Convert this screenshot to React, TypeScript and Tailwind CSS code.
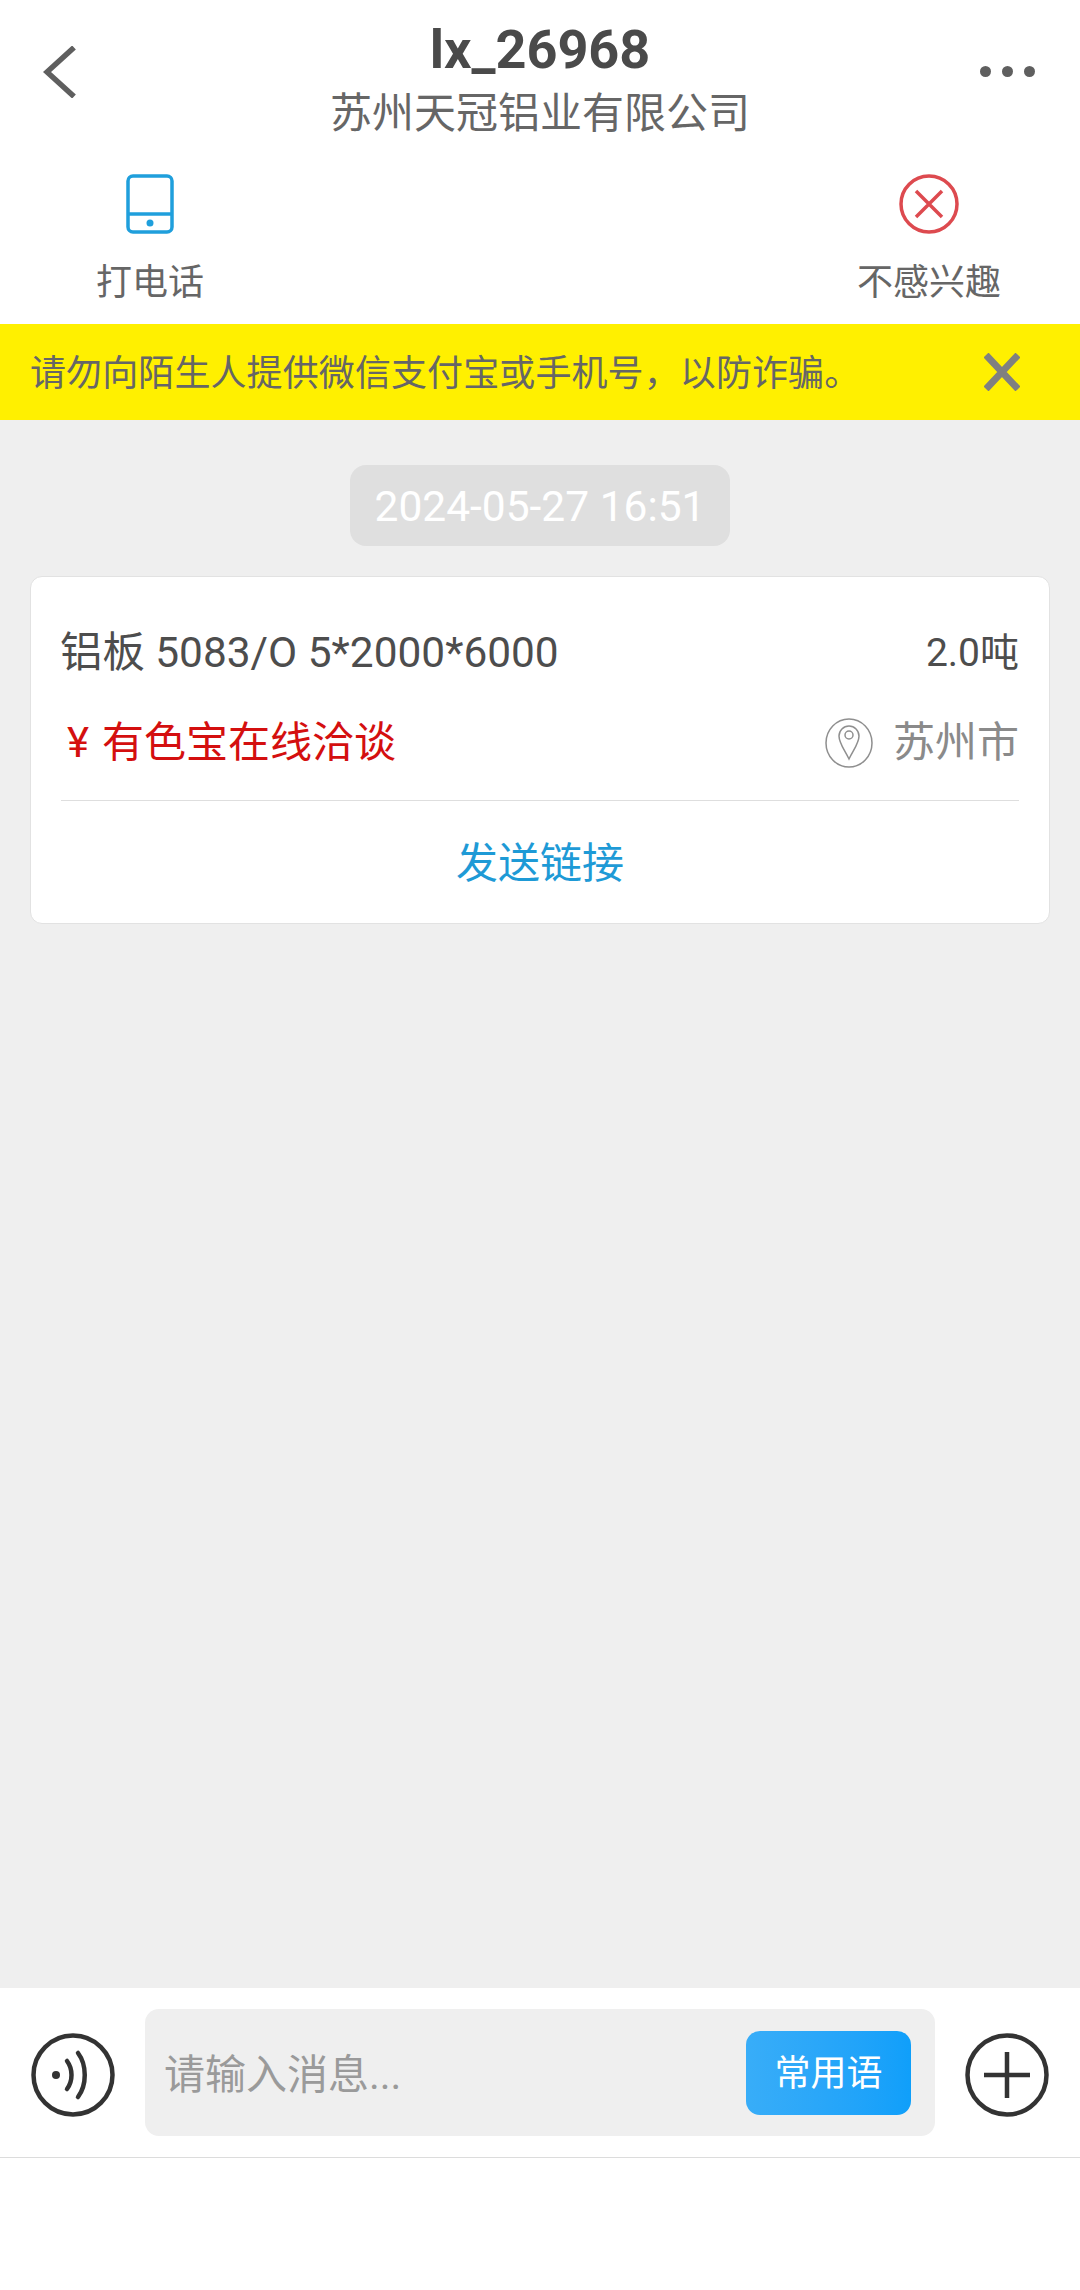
export default function App() {
  return (
    <div className="flex h-[2290px] w-[1080px] flex-col bg-white font-['Roboto','Noto_Sans_CJK_SC',sans-serif]">
      {/* title */}
      <div className="flex h-[150px] items-start justify-between">
        <div className="flex w-[200px] pl-[43px] pt-[46px]">
          <svg width="34" height="52" viewBox="0 0 34 52" fill="none" stroke="#5f5f5f" strokeWidth="5.5">
            <path d="M31 1.5 L4 26 L31 50.5" />
          </svg>
        </div>
        <div className="flex flex-col items-center pt-[15px]">
          <div className="text-[54px] leading-[70px] font-bold text-[#4a4a4a]">lx_26968</div>
          <div className="text-[42px] leading-[58px] text-[#666666]">苏州天冠铝业有限公司</div>
        </div>
        <div className="flex w-[200px] justify-end gap-[11px] pr-[45px] pt-[66px]">
          <span className="h-[11px] w-[11px] rounded-full bg-[#5f5f5f]" />
          <span className="h-[11px] w-[11px] rounded-full bg-[#5f5f5f]" />
          <span className="h-[11px] w-[11px] rounded-full bg-[#5f5f5f]" />
        </div>
      </div>

      {/* actions */}
      <div className="flex h-[174px] items-start justify-between pl-[96px] pr-[79px] pt-[24px]">
        <div className="flex w-[108px] flex-col items-center">
          <svg width="48" height="60" viewBox="0 0 48 60" fill="none" stroke="#1f9fdc" strokeWidth="3.5">
            <rect x="2" y="2" width="44" height="56" rx="5" />
            <path d="M2 40 H46" />
            <circle cx="24" cy="49" r="3.5" fill="#1f9fdc" stroke="none" />
          </svg>
          <div className="mt-[26px] text-[36px] leading-[46px] text-[#666666]">打电话</div>
        </div>
        <div className="flex w-[144px] flex-col items-center">
          <svg width="60" height="60" viewBox="0 0 60 60" fill="none" stroke="#dd4a4f" strokeWidth="3.5">
            <circle cx="30" cy="30" r="28" />
            <path d="M17 17 L43 43 M43 17 L17 43" />
          </svg>
          <div className="mt-[26px] text-[36px] leading-[46px] text-[#666666]">不感兴趣</div>
        </div>
      </div>

      {/* warning */}
      <div className="flex h-[96px] items-center justify-between bg-[#fff000] pl-[30px] pr-[60px]">
        <div className="pt-[3px] text-[36px] leading-[46px] tracking-[0.1px] text-[#666666]">请勿向陌生人提供微信支付宝或手机号，以防诈骗。</div>
        <svg width="36" height="38" viewBox="0 0 36 38" fill="none" stroke="#808080" strokeWidth="7">
          <path d="M2 2 L34 36 M34 2 L2 36" />
        </svg>
      </div>

      {/* chat */}
      <div className="flex flex-1 flex-col items-center bg-[#efefef] px-[30px] pt-[45px]">
        <div className="flex h-[81px] w-[380px] items-center justify-center rounded-[16px] bg-[#dfdfdf] pt-[3px] text-[42.5px] text-white">2024-05-27 16:51</div>
        <div className="mt-[30px] w-full rounded-[12px] border border-[#e2e2e2] bg-white px-[29px]">
          <div className="flex h-[125px] items-end justify-between pb-[21px] pr-[1px] leading-[56px] text-[#4d4d4d]">
            <span className="text-[42.4px]">铝板 5083/O 5*2000*6000</span>
            <span className="text-[39px]">2.0吨</span>
          </div>
          <div className="flex h-[98px] items-center justify-between pb-[16px] pl-[1px] pr-[1px]">
            <span className="flex items-center text-[42px] leading-[58px] text-[#d40f0f]">
              <span className="w-[41px] pl-[6px]">¥</span>有色宝在线洽谈
            </span>
            <span className="flex items-center gap-[20px] text-[42px] leading-[58px] text-[#8a8a8a]">
              <svg width="48" height="50" viewBox="0 0 48 50" fill="none" stroke="#8f8f8f" strokeWidth="1.5">
                <ellipse cx="24" cy="25" rx="23" ry="24" />
                <path d="M24 41 C19 31 14 25 14 18 A10 10 0 0 1 34 18 C34 25 29 31 24 41 Z" />
                <circle cx="24" cy="17" r="4" />
              </svg>
              苏州市
            </span>
          </div>
          <div className="mx-[1px] flex h-[123px] items-center justify-center border-t border-[#dedede] pt-[4px] text-[42px] leading-[58px] text-[#1e9ad6]">发送链接</div>
        </div>
      </div>

      {/* input bar */}
      <div className="flex h-[170px] items-center justify-between border-b border-[#dcdcdc] bg-white px-[31px]">
        <svg className="mt-[5px]" width="84" height="84" viewBox="0 0 84 84" fill="none" stroke="#333333" strokeWidth="4.5">
          <circle cx="42" cy="42" r="39.5" />
          <circle cx="25" cy="42" r="4" fill="#333333" stroke="none" />
          <path d="M36 28 C42 36 42 48 36 56" strokeLinecap="round" />
          <path d="M47 20 C56 32 56 52 47 64" strokeLinecap="round" />
        </svg>
        <div className="flex h-[127px] w-[790px] items-center justify-between rounded-[14px] bg-[#efefef] pl-[19px] pr-[24px]">
          <span className="pt-[4px] text-[41px] leading-[58px] text-[#9a9a9a]">请输入消息...</span>
          <span className="flex h-[84px] w-[165px] items-center justify-center rounded-[14px] bg-gradient-to-r from-[#38adf8] to-[#0f9ffa] pt-[2px] text-[36px] text-white">常用语</span>
        </div>
        <svg className="mt-[5px]" width="84" height="84" viewBox="0 0 84 84" fill="none" stroke="#333333" strokeWidth="4.5">
          <circle cx="42" cy="42" r="39.5" />
          <path d="M42 19 V65 M19 42 H65" />
        </svg>
      </div>
      <div className="h-[132px] bg-white" />
    </div>
  );
}
